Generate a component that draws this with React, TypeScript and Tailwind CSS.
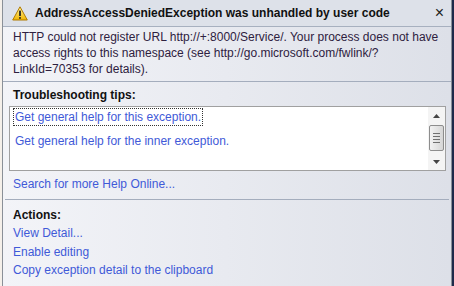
import React from "react";

const links = ["View Detail...", "Enable editing", "Copy exception detail to the clipboard"];

const WarningIcon = () => (
  <svg width="16" height="15" viewBox="0 0 16 15">
    <defs>
      <linearGradient id="warn" x1="0" y1="0" x2="0" y2="1">
        <stop offset="0" stopColor="#fff3a0" />
        <stop offset="1" stopColor="#f2b600" />
      </linearGradient>
    </defs>
    <path d="M8 0.8 L15.3 14 H0.7 Z" fill="url(#warn)" stroke="#b07a00" strokeWidth="1" strokeLinejoin="round" />
    <rect x="7.1" y="4.5" width="1.8" height="5.5" rx="0.6" fill="#222" />
    <rect x="7.1" y="11" width="1.8" height="1.8" rx="0.4" fill="#222" />
  </svg>
);

const ScrollBar = () => (
  <div className="flex w-[17px] flex-col items-center bg-[#f4f4f4]">
    <div className="flex h-[17px] w-full items-center justify-center">
      <svg width="7" height="4" viewBox="0 0 7 4"><path d="M0 4 L3.5 0 L7 4 Z" fill="#444" /></svg>
    </div>
    <div className="mt-[1px] flex h-[26px] w-[15px] flex-col items-center justify-center gap-[2px] rounded-[2px] border border-[#8d8d8d] bg-gradient-to-r from-[#f2f2f2] to-[#d6d6d6]">
      <div className="h-px w-[7px] bg-[#707070]" />
      <div className="h-px w-[7px] bg-[#707070]" />
      <div className="h-px w-[7px] bg-[#707070]" />
      <div className="h-px w-[7px] bg-[#707070]" />
    </div>
    <div className="flex-1" />
    <div className="flex h-[17px] w-full items-center justify-center">
      <svg width="7" height="4" viewBox="0 0 7 4"><path d="M0 0 L3.5 4 L7 0 Z" fill="#444" /></svg>
    </div>
  </div>
);

export default function App() {
  return (
    <div
      className="flex h-[286px] w-[454px] overflow-hidden bg-white text-[12px] leading-[16px]"
      style={{ fontFamily: '"Liberation Sans", Arial, sans-serif' }}
    >
      <div className="w-[2px] bg-[#f5f0ea]" />
      <div className="flex w-[450px] flex-col border-l border-r border-[#8a9098] bg-gradient-to-r from-[#f3f4f8] to-[#dde0e8]">
        <div className="flex h-[27px] shrink-0 items-center border-b border-[#a7b0bf] bg-[#dde1e9] pl-[9px] pr-[7px]">
          <WarningIcon />
          <span className="ml-[7px] flex-1 whitespace-nowrap text-[12px] font-bold text-[#111]">
            AddressAccessDeniedException was unhandled by user code
          </span>
          <span className="text-[16px] text-[#222]">×</span>
        </div>
        <p className="whitespace-nowrap px-[10px] pt-[2px] text-[#2e2140]">
          HTTP could not register URL http://+:8000/Service/. Your process does not have
          <br />
          access rights to this namespace (see http://go.microsoft.com/fwlink/?
          <br />
          LinkId=70353 for details).
        </p>
        <div className="mt-[4px] h-px shrink-0 bg-[#a4adbd]" />
        <div className="px-[10px] pt-[5px] font-bold text-[#111]">Troubleshooting tips:</div>
        <div className="ml-[6px] mr-[5px] mt-[3px] flex h-[65px] shrink-0 border border-[#a0a0a0] bg-white">
          <div className="flex flex-1 flex-col pl-[3px] pt-[1px] text-[#3f5ad8]">
            <span className="self-start border border-dotted border-[#333] px-[1px]">Get general help for this exception.</span>
            <span className="mt-[7px] px-[2px]">Get general help for the inner exception.</span>
          </div>
          <ScrollBar />
        </div>
        <div className="px-[10px] pt-[5px] text-[#3f5ad8]">Search for more Help Online...</div>
        <div className="ml-[2px] mr-[2px] mt-[7px] h-px shrink-0 bg-[#a4adbd]" />
        <div className="px-[10px] pt-[7px] font-bold text-[#111]">Actions:</div>
        <div className="flex flex-col gap-[2.5px] px-[10px] pt-[2px] text-[#3f5ad8]">
          {links.map((l) => (
            <span key={l}>{l}</span>
          ))}
        </div>
      </div>
      <div className="w-[2px] bg-[#1e2a4a]" />
    </div>
  );
}
